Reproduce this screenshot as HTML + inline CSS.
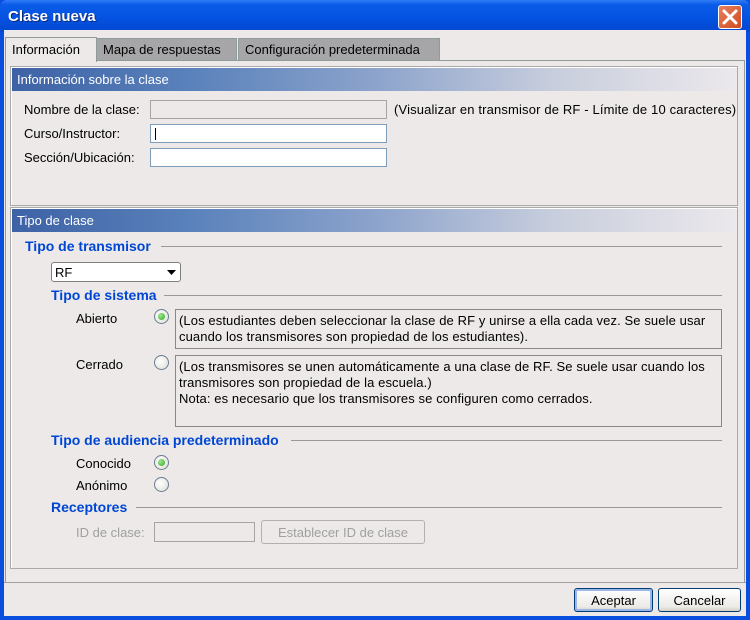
<!DOCTYPE html>
<html><head><meta charset="utf-8"><style>
*{margin:0;padding:0;box-sizing:border-box}
body{width:750px;height:620px;overflow:hidden;background:#0a4ee0;font-family:"Liberation Sans",sans-serif;font-size:13px;color:#000;position:relative}
.a{position:absolute}
.win{left:4px;top:30px;width:742px;height:586px;background:#ECE9E8}
.title{left:0;top:0;width:750px;height:32px;background:linear-gradient(#2f7cf5 0%,#0a5ce8 15%,#0451e0 60%,#0348d0 100%);border-radius:7px 7px 0 0}
.title span{position:absolute;left:8px;top:8px;color:#fff;font-weight:bold;font-size:15px;text-shadow:1px 1px 0 #0a2a80}
.close{left:718px;top:5px;width:24px;height:24px;background:linear-gradient(135deg,#e88060,#d04c20);border:1px solid #fff;border-radius:3px}
.tab{top:38px;height:22px;border:1px solid #919b9c;border-bottom:none;background:#a6a6a8;padding:3px 6px;white-space:nowrap}
.panel{left:5px;top:60px;width:740px;height:523px;border:1px solid #919b9c;background:#ECE9E8}
.box{border:1px solid #aaa;background:#ECE9E8;box-shadow:1px 1px 0 #fff inset}
.hdr{height:23px;background:linear-gradient(90deg,#3e62a6 0%,#5a82bb 25%,#8ca3cc 50%,#c8cedd 75%,#ece8ec 100%);color:#fff;padding:4px 5px;font-size:13px}
.inp{background:#fff;border:1px solid #7f9db9;height:19px}
.dis{background:#ECE9E8;border:1px solid #a5a5a5}
.blue{color:#0046d5;font-weight:bold;font-size:14px}
.line{height:1px;background:#999}
.radio{width:15px;height:15px;border-radius:50%;border:1px solid #6c7d92;background:radial-gradient(circle at 40% 40%,#fff,#dcdcd4)}
.radio.on::after{content:"";position:absolute;left:3px;top:3px;width:7px;height:7px;border-radius:50%;background:radial-gradient(circle at 35% 35%,#9fe890,#2ea81c)}
.ta{border:1px solid #888;background:#ECE9E8;padding:3px 3px;line-height:16px;letter-spacing:0.1px}
.btn{border:1px solid #003c74;border-radius:3px;background:linear-gradient(#fff,#ecebe6 80%,#d6d0c5);text-align:center;padding-top:4px}
.g{color:#a0a0a0}
</style></head><body>
<div class="a title"><span>Clase nueva</span></div>
<div class="a close"><svg width="22" height="22" viewBox="0 0 22 22"><path d="M5 5L17 17M17 5L5 17" stroke="#fff" stroke-width="3" stroke-linecap="round"/></svg></div>
<div class="a win"></div>
<div class="a panel"></div>
<div class="a tab" style="left:96px;width:141px">Mapa de respuestas</div>
<div class="a tab" style="left:238px;width:202px">Configuración predeterminada</div>
<div class="a tab" style="left:5px;top:37px;width:92px;height:25px;background:#ECE9E8;padding-top:4px">Información</div>

<div class="a box" style="left:10px;top:66px;width:728px;height:140px"><div class="hdr" style="margin:1px">Información sobre la clase</div></div>
<div class="a" style="left:24px;top:102px">Nombre de la clase:</div>
<div class="a dis" style="left:150px;top:100px;width:237px;height:19px"></div>
<div class="a" style="left:394px;top:102px;letter-spacing:0.15px">(Visualizar en transmisor de RF - Límite de 10 caracteres)</div>
<div class="a" style="left:24px;top:126px">Curso/Instructor:</div>
<div class="a inp" style="left:150px;top:124px;width:237px"><div style="position:absolute;left:4px;top:3px;width:1px;height:12px;background:#000"></div></div>
<div class="a" style="left:24px;top:150px">Sección/Ubicación:</div>
<div class="a inp" style="left:150px;top:148px;width:237px"></div>

<div class="a box" style="left:10px;top:207px;width:728px;height:362px"><div class="hdr" style="margin:1px">Tipo de clase</div></div>
<div class="a blue" style="left:25px;top:238px">Tipo de transmisor</div>
<div class="a line" style="left:161px;top:246px;width:561px"></div>
<div class="a" style="left:51px;top:262px;width:130px;height:20px;border:1px solid #7f7f7f;border-radius:3px;background:#fff;padding:2px 3px">RF<svg style="position:absolute;right:4px;top:7px" width="9" height="5"><path d="M0 0H9L4.5 5Z"/></svg></div>
<div class="a blue" style="left:51px;top:287px">Tipo de sistema</div>
<div class="a line" style="left:164px;top:295px;width:558px"></div>
<div class="a" style="left:76px;top:311px">Abierto</div>
<div class="a radio on" style="left:154px;top:309px"></div>
<div class="a ta" style="left:175px;top:309px;width:547px;height:40px">(Los estudiantes deben seleccionar la clase de RF y unirse a ella cada vez. Se suele usar cuando los transmisores son propiedad de los estudiantes).</div>
<div class="a" style="left:76px;top:357px">Cerrado</div>
<div class="a radio" style="left:154px;top:355px"></div>
<div class="a ta" style="left:175px;top:355px;width:547px;height:72px">(Los transmisores se unen automáticamente a una clase de RF. Se suele usar cuando los transmisores son propiedad de la escuela.)<br>Nota: es necesario que los transmisores se configuren como cerrados.</div>
<div class="a blue" style="left:51px;top:432px">Tipo de audiencia predeterminado</div>
<div class="a line" style="left:291px;top:440px;width:431px"></div>
<div class="a" style="left:76px;top:456px">Conocido</div>
<div class="a radio on" style="left:154px;top:455px"></div>
<div class="a" style="left:76px;top:478px">Anónimo</div>
<div class="a radio" style="left:154px;top:477px"></div>
<div class="a blue" style="left:51px;top:499px">Receptores</div>
<div class="a line" style="left:136px;top:507px;width:586px"></div>
<div class="a g" style="left:76px;top:525px">ID de clase:</div>
<div class="a dis" style="left:154px;top:522px;width:101px;height:20px"></div>
<div class="a g" style="left:261px;top:520px;width:164px;height:24px;border:1px solid #b0b0b0;border-radius:3px;text-align:center;padding-top:4px">Establecer ID de clase</div>

<div class="a line" style="left:4px;top:582px;width:742px;background:#a0a0a0"></div>
<div class="a btn" style="left:574px;top:588px;width:79px;height:24px;box-shadow:inset 0 0 0 2px #9cb6e8">Aceptar</div>
<div class="a btn" style="left:658px;top:588px;width:83px;height:24px">Cancelar</div>
</body></html>
